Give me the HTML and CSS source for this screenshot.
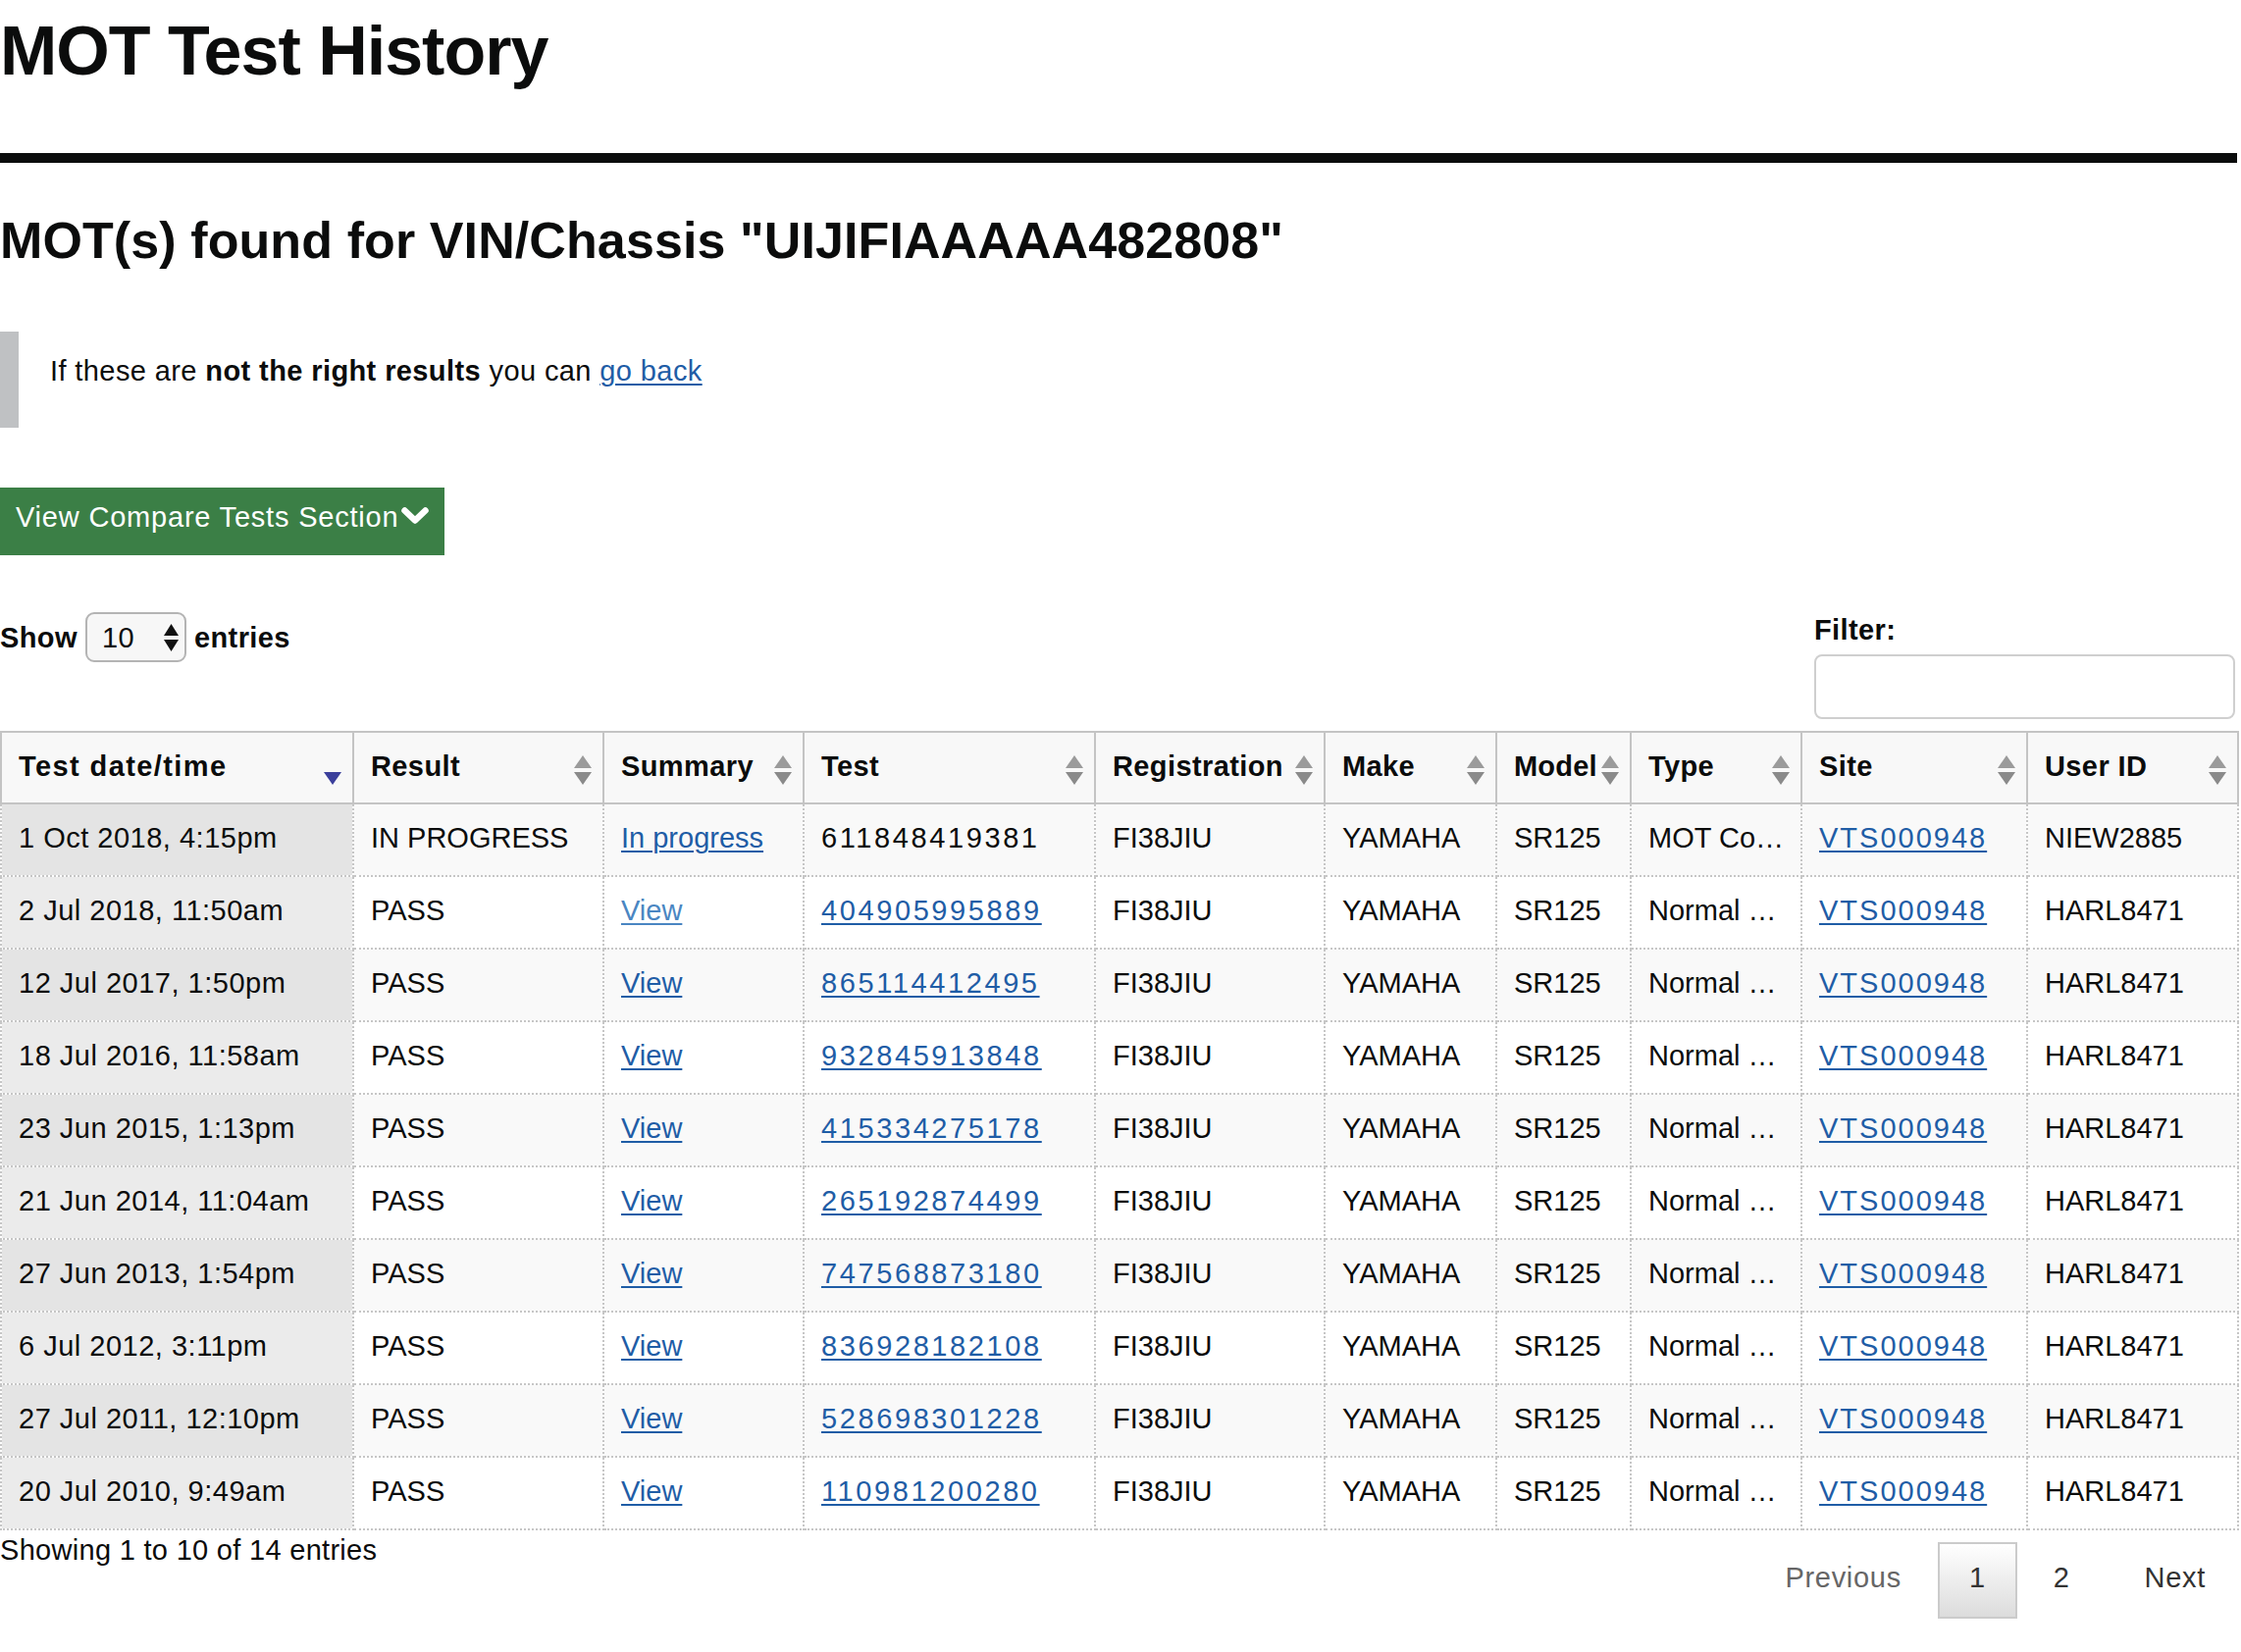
FILE: index.html
```html
<!DOCTYPE html>
<html lang="en">
<head>
<meta charset="utf-8">
<title>MOT Test History</title>
<link rel="stylesheet" href="styles.css">
</head>
<body>
<div class="page">
  <h1 class="title">MOT Test History</h1>
  <div class="rule"></div>
  <h2 class="subtitle">MOT(s) found for VIN/Chassis "UIJIFIAAAAA482808"</h2>
  <div class="inset">If these are <strong>not the right results</strong> you can <a href="#">go back</a></div>
  <div class="btn-row">
    <a class="btn" href="#"><span>View Compare Tests Section</span><svg class="chev" width="28" height="18" viewBox="0 0 28 18"><path d="M3.5 3.5 L14 13.5 L24.5 3.5" fill="none" stroke="#fff" stroke-width="6.5" stroke-linecap="round" stroke-linejoin="round"/></svg></a>
  </div>

  <div class="controls">
    <div class="length">
      <span>Show</span>
      <span class="select"><span>10</span><svg width="15" height="28" viewBox="0 0 15 28"><path d="M7.5 0 L15 12 H0 Z" fill="#111"/><path d="M0 16 H15 L7.5 28 Z" fill="#111"/></svg></span>
      <span>entries</span>
    </div>
    <div class="filter">
      <label class="filter-label" for="flt">Filter:</label>
      <input id="flt" class="filter-input" type="text">
    </div>
  </div>

  <table class="grid">
    <colgroup>
      <col style="width:359px"><col style="width:255px"><col style="width:204px"><col style="width:297px"><col style="width:234px"><col style="width:175px"><col style="width:137px"><col style="width:174px"><col style="width:230px"><col style="width:215px">
    </colgroup>
    <thead>
      <tr>
        <th><div class="th-in"><span class="wide">Test date/time</span><svg class="sort" width="18" height="30" viewBox="0 0 18 30"><path d="M0 17 H18 L9 30 Z" fill="#3b3f9b"/></svg></div></th>
        <th><div class="th-in"><span>Result</span><svg class="sort" width="18" height="30" viewBox="0 0 18 30"><path d="M9 0 L18 13 H0 Z" fill="#9b9b9b"/><path d="M0 17 H18 L9 30 Z" fill="#8a8a8a"/></svg></div></th>
        <th><div class="th-in"><span>Summary</span><svg class="sort" width="18" height="30" viewBox="0 0 18 30"><path d="M9 0 L18 13 H0 Z" fill="#9b9b9b"/><path d="M0 17 H18 L9 30 Z" fill="#8a8a8a"/></svg></div></th>
        <th><div class="th-in"><span>Test</span><svg class="sort" width="18" height="30" viewBox="0 0 18 30"><path d="M9 0 L18 13 H0 Z" fill="#9b9b9b"/><path d="M0 17 H18 L9 30 Z" fill="#8a8a8a"/></svg></div></th>
        <th><div class="th-in"><span>Registration</span><svg class="sort" width="18" height="30" viewBox="0 0 18 30"><path d="M9 0 L18 13 H0 Z" fill="#9b9b9b"/><path d="M0 17 H18 L9 30 Z" fill="#8a8a8a"/></svg></div></th>
        <th><div class="th-in"><span>Make</span><svg class="sort" width="18" height="30" viewBox="0 0 18 30"><path d="M9 0 L18 13 H0 Z" fill="#9b9b9b"/><path d="M0 17 H18 L9 30 Z" fill="#8a8a8a"/></svg></div></th>
        <th><div class="th-in"><span class="tight">Model</span><svg class="sort" width="18" height="30" viewBox="0 0 18 30"><path d="M9 0 L18 13 H0 Z" fill="#9b9b9b"/><path d="M0 17 H18 L9 30 Z" fill="#8a8a8a"/></svg></div></th>
        <th><div class="th-in"><span>Type</span><svg class="sort" width="18" height="30" viewBox="0 0 18 30"><path d="M9 0 L18 13 H0 Z" fill="#9b9b9b"/><path d="M0 17 H18 L9 30 Z" fill="#8a8a8a"/></svg></div></th>
        <th><div class="th-in"><span>Site</span><svg class="sort" width="18" height="30" viewBox="0 0 18 30"><path d="M9 0 L18 13 H0 Z" fill="#9b9b9b"/><path d="M0 17 H18 L9 30 Z" fill="#8a8a8a"/></svg></div></th>
        <th><div class="th-in"><span>User ID</span><svg class="sort" width="18" height="30" viewBox="0 0 18 30"><path d="M9 0 L18 13 H0 Z" fill="#9b9b9b"/><path d="M0 17 H18 L9 30 Z" fill="#8a8a8a"/></svg></div></th>
      </tr>
    </thead>
    <tbody>
      <tr class="odd"><td class="date">1 Oct 2018, 4:15pm</td><td>IN PROGRESS</td><td><a href="#">In progress</a></td><td class="num">611848419381</td><td>FI38JIU</td><td>YAMAHA</td><td>SR125</td><td>MOT Co…</td><td class="site"><a href="#">VTS000948</a></td><td>NIEW2885</td></tr>
      <tr class="even"><td class="date">2 Jul 2018, 11:50am</td><td>PASS</td><td><a class="hover" href="#">View</a></td><td class="num"><a href="#">404905995889</a></td><td>FI38JIU</td><td>YAMAHA</td><td>SR125</td><td>Normal …</td><td class="site"><a href="#">VTS000948</a></td><td>HARL8471</td></tr>
      <tr class="odd"><td class="date">12 Jul 2017, 1:50pm</td><td>PASS</td><td><a href="#">View</a></td><td class="num"><a href="#">865114412495</a></td><td>FI38JIU</td><td>YAMAHA</td><td>SR125</td><td>Normal …</td><td class="site"><a href="#">VTS000948</a></td><td>HARL8471</td></tr>
      <tr class="even"><td class="date">18 Jul 2016, 11:58am</td><td>PASS</td><td><a href="#">View</a></td><td class="num"><a href="#">932845913848</a></td><td>FI38JIU</td><td>YAMAHA</td><td>SR125</td><td>Normal …</td><td class="site"><a href="#">VTS000948</a></td><td>HARL8471</td></tr>
      <tr class="odd"><td class="date">23 Jun 2015, 1:13pm</td><td>PASS</td><td><a href="#">View</a></td><td class="num"><a href="#">415334275178</a></td><td>FI38JIU</td><td>YAMAHA</td><td>SR125</td><td>Normal …</td><td class="site"><a href="#">VTS000948</a></td><td>HARL8471</td></tr>
      <tr class="even"><td class="date">21 Jun 2014, 11:04am</td><td>PASS</td><td><a href="#">View</a></td><td class="num"><a href="#">265192874499</a></td><td>FI38JIU</td><td>YAMAHA</td><td>SR125</td><td>Normal …</td><td class="site"><a href="#">VTS000948</a></td><td>HARL8471</td></tr>
      <tr class="odd"><td class="date">27 Jun 2013, 1:54pm</td><td>PASS</td><td><a href="#">View</a></td><td class="num"><a href="#">747568873180</a></td><td>FI38JIU</td><td>YAMAHA</td><td>SR125</td><td>Normal …</td><td class="site"><a href="#">VTS000948</a></td><td>HARL8471</td></tr>
      <tr class="even"><td class="date">6 Jul 2012, 3:11pm</td><td>PASS</td><td><a href="#">View</a></td><td class="num"><a href="#">836928182108</a></td><td>FI38JIU</td><td>YAMAHA</td><td>SR125</td><td>Normal …</td><td class="site"><a href="#">VTS000948</a></td><td>HARL8471</td></tr>
      <tr class="odd"><td class="date">27 Jul 2011, 12:10pm</td><td>PASS</td><td><a href="#">View</a></td><td class="num"><a href="#">528698301228</a></td><td>FI38JIU</td><td>YAMAHA</td><td>SR125</td><td>Normal …</td><td class="site"><a href="#">VTS000948</a></td><td>HARL8471</td></tr>
      <tr class="even"><td class="date">20 Jul 2010, 9:49am</td><td>PASS</td><td><a href="#">View</a></td><td class="num"><a href="#">110981200280</a></td><td>FI38JIU</td><td>YAMAHA</td><td>SR125</td><td>Normal …</td><td class="site"><a href="#">VTS000948</a></td><td>HARL8471</td></tr>
    </tbody>
  </table>

  <div class="footer">
    <div class="info">Showing 1 to 10 of 14 entries</div>
    <div class="pager">
      <span class="pg disabled">Previous</span>
      <span class="pg current">1</span>
      <a class="pg" href="#">2</a>
      <a class="pg pg-next" href="#">Next</a>
    </div>
  </div>
</div>
</body>
</html>
```
FILE: styles.css
```css
html, body {
  margin: 0;
  padding: 0;
  background: #fff;
}
body {
  font-family: "Liberation Sans", Arial, sans-serif;
  color: #0b0c0c;
  font-size: 29px;
  line-height: 40px;
}
.page {
  width: 2280px;
}
a {
  color: #1f5da6;
  text-decoration: underline;
  text-decoration-thickness: 2px;
  text-underline-offset: 3px;
}
a.hover {
  color: #4a86c2;
}
.title {
  margin: 12px 0 0;
  font-size: 70px;
  line-height: 80px;
  font-weight: 700;
  letter-spacing: -1px;
}
.rule {
  height: 10px;
  background: #0b0c0c;
  margin-top: 64px;
}
.subtitle {
  margin: 49px 0 0;
  font-size: 52px;
  line-height: 60px;
  font-weight: 700;
  letter-spacing: 0.1px;
}
.inset {
  margin-top: 63px;
  border-left: 19px solid #bfc1c3;
  padding: 20px 0 38px 32px;
  letter-spacing: 0.4px;
}
.btn-row {
  margin-top: 61px;
}
.btn {
  display: flex;
  width: max-content;
  align-items: flex-start;
  box-sizing: border-box;
  height: 69px;
  padding: 10px 16px 19px 16px;
  background: #3b7f46;
  color: #fff;
  text-decoration: none;
  letter-spacing: 0.8px;
}
.chev {
  margin-top: 10px;
  margin-left: 3px;
}
.controls {
  margin-top: 56px;
  display: flex;
  justify-content: space-between;
  align-items: flex-start;
}
.length {
  margin-top: 2px;
  display: flex;
  align-items: center;
  gap: 8px;
  font-weight: 700;
  letter-spacing: 0.4px;
}
.select {
  box-sizing: border-box;
  width: 103px;
  height: 51px;
  border: 2px solid #b4b4b4;
  border-radius: 9px;
  background: #f7f7f7;
  display: flex;
  align-items: center;
  justify-content: space-between;
  padding: 0 6px 0 15px;
  font-weight: 400;
}
.filter {
  width: 429px;
  margin-right: 2px;
}
.filter-label {
  display: block;
  font-weight: 700;
  letter-spacing: 0.4px;
}
.filter-input {
  display: block;
  box-sizing: border-box;
  width: 429px;
  height: 66px;
  margin: 5px 0 0;
  border: 2px solid #cfcfcf;
  border-radius: 8px;
  background: #fff;
  font: inherit;
  outline: none;
}
.grid {
  margin-top: 12px;
  width: 2280px;
  table-layout: fixed;
  border-collapse: collapse;
}
.grid th {
  box-sizing: border-box;
  height: 73px;
  padding: 0 11px 4px 17px;
  background: #f8f8f8;
  border: 2px solid #c4c4c4;
  text-align: left;
  font-weight: 700;
  white-space: nowrap;
  letter-spacing: 0.4px;
}
.grid th .wide {
  letter-spacing: 1.4px;
}
.grid th .tight {
  letter-spacing: 0.2px;
}
.th-in {
  display: flex;
  align-items: center;
  justify-content: space-between;
}
.sort {
  flex: none;
  margin-top: 8px;
}
.grid td {
  box-sizing: border-box;
  height: 74px;
  padding: 0 17px 4px;
  border: 2px dotted #c6c6c6;
  white-space: nowrap;
  overflow: hidden;
  vertical-align: middle;
}
.grid td.num {
  letter-spacing: 2.6px;
}
.grid td.site {
  letter-spacing: 2px;
}
.grid td.date {
  letter-spacing: 0.5px;
}
.grid tr.odd td {
  background: #f9f9f9;
}
.grid tr.even td {
  background: #ffffff;
}
.grid tr.odd td:first-child {
  background: #e4e4e4;
}
.grid tr.even td:first-child {
  background: #ebebeb;
}
.footer {
  display: flex;
  justify-content: space-between;
  align-items: flex-start;
}
.info {
  letter-spacing: 0.3px;
}
.pager {
  margin-top: 12px;
  margin-right: 6px;
  display: flex;
}
.pg {
  display: block;
  box-sizing: border-box;
  height: 78px;
  padding: 0 30px 6px;
  line-height: 68px;
  margin-left: 5px;
  border: 2px solid transparent;
  color: #333;
  text-decoration: none;
  letter-spacing: 0.7px;
}
.pg-next {
  margin-left: 12px;
  padding-right: 24px;
}
.pg.disabled {
  color: #666;
}
.pg.current {
  border-color: #cbcbcb;
  background: linear-gradient(to bottom, #ffffff 0%, #dcdcdc 100%);
  color: #333;
}
```
